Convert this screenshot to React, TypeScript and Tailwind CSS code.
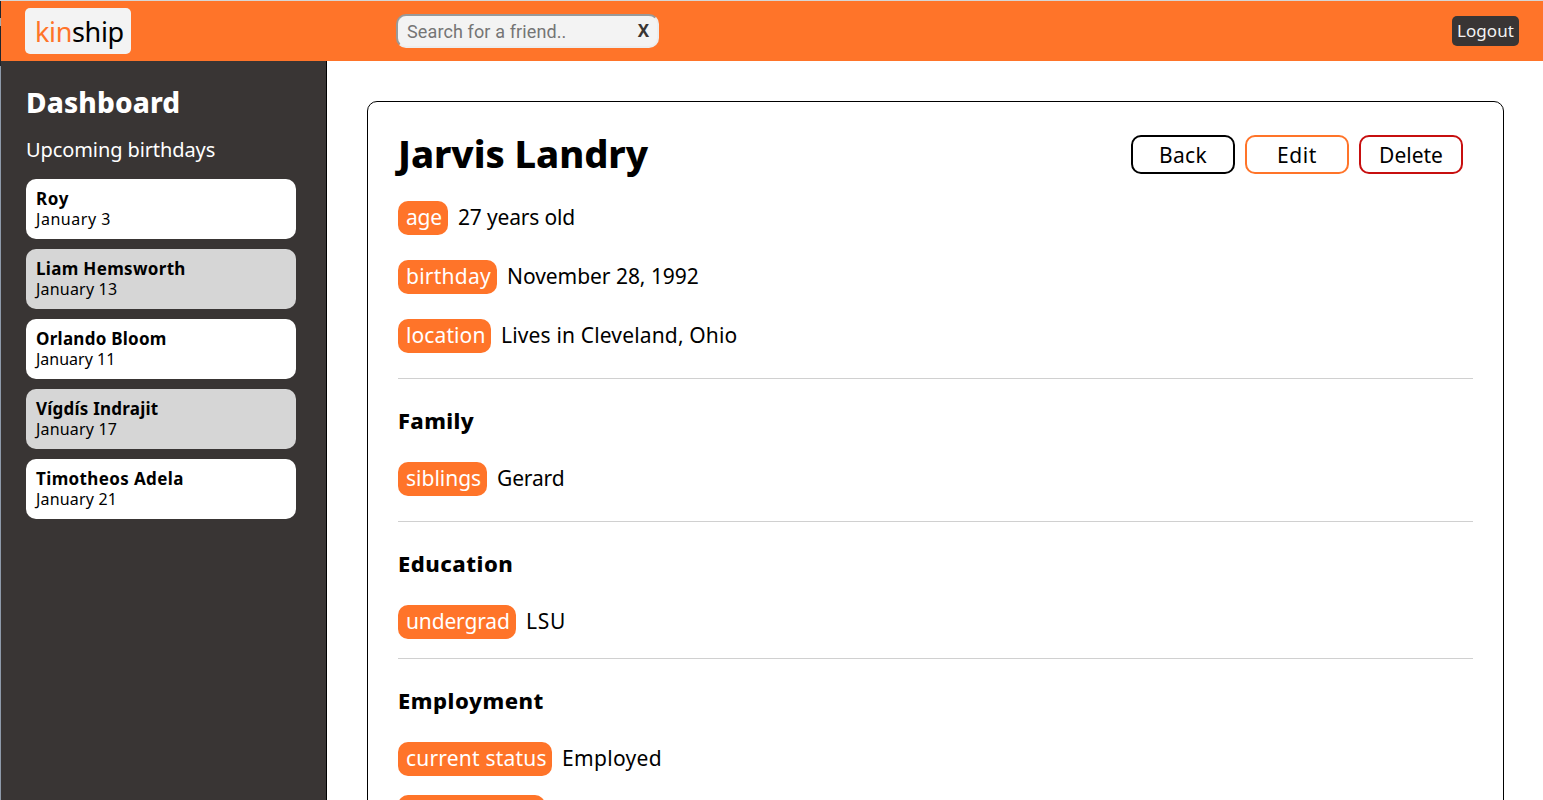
const birthdays = [
  { name: "Roy", date: "January 3", nameTrack: "tracking-[0.6px]", dateTrack: "tracking-[0.54px]" },
  { name: "Liam Hemsworth", date: "January 13", nameTrack: "tracking-[0.32px]", dateTrack: "tracking-[0.2px]" },
  { name: "Orlando Bloom", date: "January 11", nameTrack: "tracking-[0.26px]", dateTrack: "tracking-normal" },
  { name: "Vígdís Indrajit", date: "January 17", nameTrack: "tracking-[0.22px]", dateTrack: "tracking-[0.17px]" },
  { name: "Timotheos Adela", date: "January 21", nameTrack: "tracking-[0.37px]", dateTrack: "tracking-[0.17px]" },
];

type FactProps = { label: string; value: string; width: string; labelTrack?: string; valueTrack?: string };

function Fact({ label, value, width, labelTrack = "", valueTrack = "" }: FactProps) {
  return (
    <div className="flex h-[34px] shrink-0 items-center gap-2.5 text-[21px] leading-[34px] whitespace-nowrap">
      <span className={`h-[34px] shrink-0 rounded-[10px] bg-[#ff7429] pl-2 leading-[32px] text-white ${width} ${labelTrack}`}>{label}</span>
      <span className={`h-[34px] leading-[32px] ${valueTrack}`}>{value}</span>
    </div>
  );
}

function SectionTitle({ title, track }: { title: string; track: string }) {
  return <h2 className={`h-[30px] text-[22px] leading-[28px] font-extrabold ${track}`}>{title}</h2>;
}

function Header() {
  return (
    <header className="flex h-[60px] shrink-0 bg-[#ff7429]">
      <div className="mt-[7px] ml-6 h-[46px] w-[106px] rounded-[5px] bg-[#f3f3f3] pl-[10px] text-[27px] leading-[48px] tracking-[-0.35px] whitespace-nowrap">
        <span className="text-[#ff7429]">kin</span>ship
      </div>
      <div className="mt-[13px] ml-[265px] flex h-[34px] w-[263px] items-center justify-between rounded-[10px] border-2 border-t-[#999] border-r-[#ededed] border-b-[#ededed] border-l-[#999] bg-[#f3f3f3] pr-[7px] pl-[9px]">
        <input
          className="w-[190px] bg-transparent font-[Roboto,sans-serif] text-[18px] tracking-[0.12px] text-[#333] outline-none placeholder:text-[#757575]"
          placeholder="Search for a friend.."
        />
        <button className="h-[30px] w-[13px] text-center text-[17px] leading-[30px] font-bold text-[#393534]">X</button>
      </div>
      <button className="mt-[15px] mr-6 ml-auto h-[30px] w-[67px] rounded-[5px] bg-[#393534] text-[17px] leading-[30px] tracking-[0.07px] text-[#f3f3f3]">Logout</button>
    </header>
  );
}

function Sidebar() {
  return (
    <aside className="w-[326px] shrink-0 border-r border-black bg-[#393534] pt-[24px] pl-[25px]">
      <h2 className="h-9 text-[28px] leading-[34px] font-extrabold tracking-[0.15px] text-white">Dashboard</h2>
      <p className="mt-[14px] h-[30px] text-[20px] leading-[30px] tracking-[-0.1px] text-white">Upcoming birthdays</p>
      <ul className="mt-[14px] flex w-[270px] flex-col gap-2.5">
        {birthdays.map((b, i) => (
          <li key={b.name} className={`h-[60px] rounded-[10px] px-2.5 pt-2.5 leading-5 ${i % 2 ? "bg-[#d6d6d6]" : "bg-white"}`}>
            <div className={`text-[17px] leading-5 font-bold ${b.nameTrack}`}>{b.name}</div>
            <div className={`text-[16px] leading-5 ${b.dateTrack}`}>{b.date}</div>
          </li>
        ))}
      </ul>
    </aside>
  );
}

const action = "h-[39px] w-[104px] rounded-[10px] border-2 text-[21px] leading-[36px]";

export default function App() {
  return (
    <div className="flex h-[800px] overflow-hidden border-t border-[#d6d6d6] bg-white font-['Noto_Sans',sans-serif] text-black">
      <div className="flex w-px shrink-0 flex-col bg-[#8e9aaa]">
        <div className="h-[17px] bg-[#20242a]" />
        <div className="h-2 bg-[#aaa]" />
        <div className="h-10 bg-[#20242a]" />
      </div>
      <div className="flex min-w-0 flex-1 flex-col">
        <Header />
        <div className="flex min-h-0 flex-1">
          <Sidebar />
          <main className="flex-1 pt-10 pr-[39px] pl-10">
            <article className="h-[1000px] rounded-[10px] border border-black px-[30px]">
              <div className="flex h-[99px] justify-between">
                <h1 className="mt-[26px] h-[50px] text-[38px] leading-[50px] font-extrabold tracking-[-0.06px] whitespace-nowrap">Jarvis Landry</h1>
                <div className="mt-[33px] mr-[10px] flex gap-2.5">
                  <button className={`${action} border-black tracking-[0.3px]`}>Back</button>
                  <button className={`${action} border-[#ff7429] tracking-[0.6px]`}>Edit</button>
                  <button className={`${action} border-[#c70f0f]`}>Delete</button>
                </div>
              </div>
              <section className="flex h-[178px] flex-col gap-[25px] border-b border-[#d0d0d0]">
                <Fact label="age" value="27 years old" width="w-[50px]" labelTrack="tracking-[-0.2px]" valueTrack="tracking-[-0.17px]" />
                <Fact label="birthday" value="November 28, 1992" width="w-[99px]" labelTrack="tracking-[0.25px]" valueTrack="tracking-[-0.04px]" />
                <Fact label="location" value="Lives in Cleveland, Ohio" width="w-[93px]" labelTrack="tracking-[0.1px]" valueTrack="tracking-[0.16px]" />
              </section>
              <section className="h-[143px] border-b border-[#d0d0d0] pt-[27px]">
                <SectionTitle title="Family" track="tracking-[0.4px]" />
                <div className="mt-[26px]"><Fact label="siblings" value="Gerard" width="w-[89px]" valueTrack="tracking-[-0.15px]" /></div>
              </section>
              <section className="h-[137px] border-b border-[#d0d0d0] pt-[27px]">
                <SectionTitle title="Education" track="tracking-[0.5px]" />
                <div className="mt-[26px]"><Fact label="undergrad" value="LSU" width="w-[118px]" labelTrack="tracking-[-0.15px]" valueTrack="tracking-[0.7px]" /></div>
              </section>
              <section className="pt-[27px]">
                <SectionTitle title="Employment" track="tracking-[0.55px]" />
                <div className="mt-[26px] flex flex-col gap-[19px]">
                  <Fact label="current status" value="Employed" width="w-[154px]" labelTrack="tracking-[0.2px]" valueTrack="tracking-[0.32px]" />
                  <div className="h-[34px] w-[147px] rounded-[10px] bg-[#ff7429]" />
                </div>
              </section>
            </article>
          </main>
        </div>
      </div>
    </div>
  );
}
